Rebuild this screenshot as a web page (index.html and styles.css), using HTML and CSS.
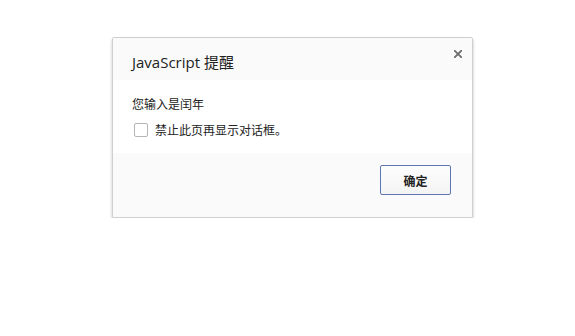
FILE: index.html
```html
<!DOCTYPE html>
<html lang="zh">
<head>
<meta charset="utf-8">
<link rel="stylesheet" href="styles.css">
</head>
<body>
<div class="page">
  <div class="dialog">
    <div class="header">
      <div class="title">JavaScript 提醒</div>
      <div class="close" aria-label="关闭">
        <svg width="8" height="8" viewBox="0 0 8 8"><path d="M0.8 0.8 L7.2 7.2 M7.2 0.8 L0.8 7.2" stroke="#6b6b6b" stroke-width="1.8" stroke-linecap="square"/></svg>
      </div>
    </div>
    <div class="body">
      <div class="message">您输入是闰年</div>
      <label class="check"><span class="box"></span><span class="label">禁止此页再显示对话框。</span></label>
    </div>
    <div class="footer">
      <button class="ok">确定</button>
    </div>
  </div>
</div>
</body>
</html>
```
FILE: styles.css
```css
html, body {
  margin: 0;
  padding: 0;
  background: #ffffff;
}
.page {
  padding: 37px 0 0 112px;
  font-family: "Noto Sans CJK SC", "Noto Sans", sans-serif;
  color: #222;
}
.dialog {
  width: 359px;
  border: 1px solid #cfcfcf;
  border-radius: 2px;
  box-shadow: 0 2px 3px rgba(0,0,0,0.25);
  background: #fff;
  display: flex;
  flex-direction: column;
}
.header {
  height: 42px;
  background: #fafafa;
  display: flex;
  align-items: flex-start;
  justify-content: space-between;
  padding: 0 10px 0 19px;
}
.title {
  font-family: "Open Sans", "Noto Sans CJK SC", sans-serif;
  font-size: 15px;
  line-height: 20px;
  margin-top: 14px;
  color: #222;
}
.close {
  margin-top: 12px;
  width: 8px;
  height: 8px;
  display: flex;
}
.body {
  height: 73px;
  padding: 15px 0 0 19px;
  box-sizing: border-box;
  display: flex;
  flex-direction: column;
  gap: 9px;
}
.message {
  font-size: 12px;
  line-height: 17px;
  color: #222;
}
.check {
  display: flex;
  align-items: center;
  gap: 7px;
  margin-left: 2px;
}
.box {
  width: 12px;
  height: 12px;
  border: 1px solid #b5b5b5;
  border-radius: 2px;
  background: #fff;
}
.label {
  font-size: 12px;
  line-height: 17px;
  color: #222;
}
.footer {
  height: 64px;
  background: #fafafa;
  display: flex;
  justify-content: flex-end;
  align-items: flex-start;
  padding: 12px 21px 0 0;
  box-sizing: border-box;
}
.ok {
  width: 71px;
  height: 30px;
  border: 1px solid #5f77b0;
  border-radius: 2px;
  background: linear-gradient(#fdfdfd, #f4f4f4);
  font-family: "Noto Sans CJK SC", sans-serif;
  font-size: 12px;
  font-weight: bold;
  color: #222;
  padding: 0;
}
```
